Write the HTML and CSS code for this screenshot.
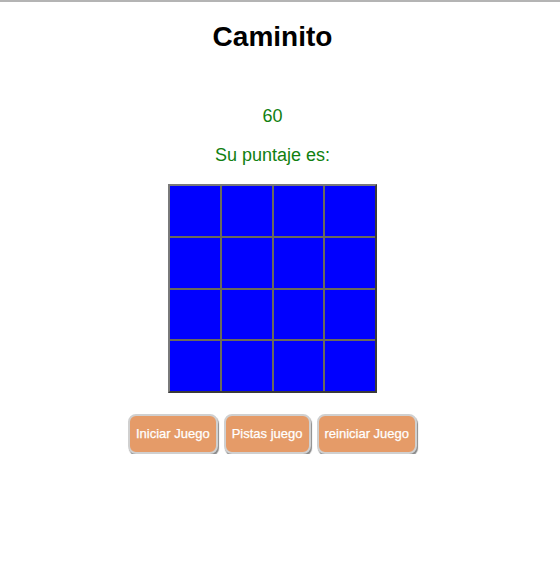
FILE: index.html
```html
<!DOCTYPE html>
<html lang="es">
<head>
<meta charset="utf-8">
<title>Caminito</title>
<link rel="stylesheet" href="styles.css">
</head>
<body>
<div class="topline"></div>
<main class="page">
  <h1 class="title">Caminito</h1>
  <p class="score">60</p>
  <p class="label">Su puntaje es:</p>
  <div class="board">
    <div class="cell"></div><div class="cell"></div><div class="cell"></div><div class="cell"></div>
    <div class="cell"></div><div class="cell"></div><div class="cell"></div><div class="cell"></div>
    <div class="cell"></div><div class="cell"></div><div class="cell"></div><div class="cell"></div>
    <div class="cell"></div><div class="cell"></div><div class="cell"></div><div class="cell"></div>
  </div>
  <div class="actions">
    <button class="btn">Iniciar Juego</button>
    <button class="btn">Pistas juego</button>
    <button class="btn">reiniciar Juego</button>
  </div>
</main>
</body>
</html>
```

FILE: styles.css
```css
html, body {
  margin: 0;
  padding: 0;
  background: #ffffff;
}
body {
  font-family: "Liberation Sans", Arial, sans-serif;
}
.topline {
  height: 2px;
  background: #b4b4b4;
}
.page {
  width: 545px;
  display: flex;
  flex-direction: column;
  align-items: center;
}
.title {
  margin: 19px 0 0;
  font-size: 28px;
  line-height: 32px;
  font-weight: bold;
  color: #000;
}
.score {
  margin: 53px 0 0;
  font-size: 18px;
  line-height: 21px;
  color: #108010;
}
.label {
  margin: 18px 0 0;
  font-size: 18px;
  line-height: 21px;
  color: #108010;
}
.board {
  margin-top: 18px;
  width: 205px;
  height: 205px;
  display: grid;
  grid-template-columns: repeat(4, 1fr);
  grid-template-rows: repeat(4, 1fr);
  gap: 2px;
  background: #6a6a5a;
  border: 2px solid;
  border-color: #7a7a7a #3a3a3a #3a3a3a #7a7a7a;
}
.cell {
  background: #0000ff;
}
.actions {
  margin-top: 21px;
  display: flex;
  gap: 6px;
}
.btn {
  font-family: "Liberation Sans", Arial, sans-serif;
  font-size: 13px;
  font-weight: normal;
  line-height: 15px;
  color: #ffffff;
  -webkit-text-stroke: 0.25px #ffffff;
  background: #e59b68;
  border: 2px solid #d0d0d0;
  border-radius: 8px;
  padding: 10px 6px 11px;
  box-shadow: 1px 2px 1px #8a8a8a;
}
```
